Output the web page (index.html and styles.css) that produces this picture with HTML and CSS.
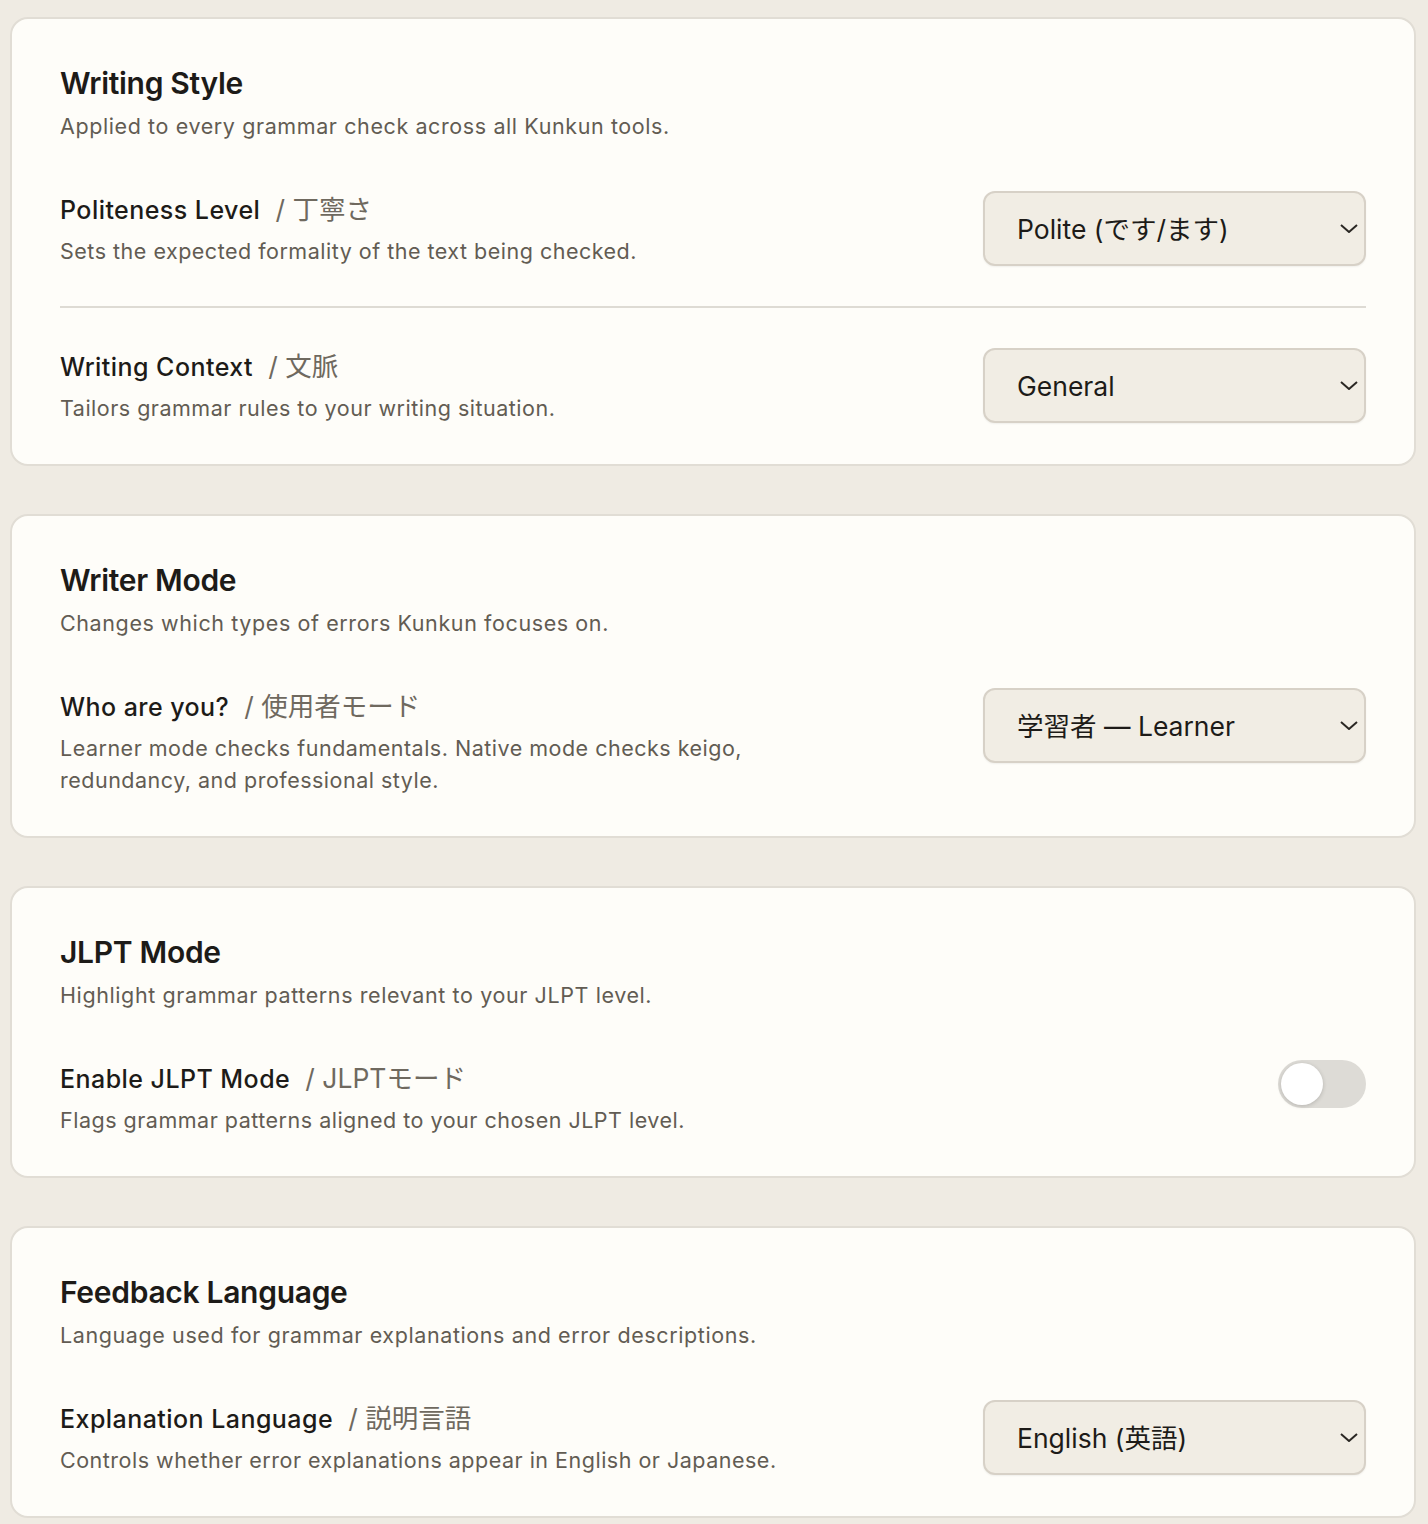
FILE: index.html
```html
<!DOCTYPE html>
<html lang="en">

	<head>
		<meta charset="UTF-8">
		<title>Settings</title>
		<link rel="stylesheet" href="styles.css">
	</head>

	<body>
		<div class="page">

			<section class="card">
				<div class="card-head">
					<h2>Writing Style</h2>
					<p>Applied to every grammar check across all Kunkun tools.</p>
				</div>
				<div class="row">
					<div class="row-text">
						<div class="label">Politeness Level <span class="jp">/ 丁寧さ</span></div>
						<p class="desc">Sets the expected formality of the text being checked.</p>
					</div>
					<div class="select-wrap">
						<select class="select">
							<option>Polite (です/ます)</option>
							<option>Casual (だ/である)</option>
						</select>
						<svg class="chevron" viewBox="0 0 18 9"><path d="M1 1 L9 8 L17 1" /></svg>
					</div>
				</div>
				<div class="row">
					<div class="row-text">
						<div class="label">Writing Context <span class="jp">/ 文脈</span></div>
						<p class="desc">Tailors grammar rules to your writing situation.</p>
					</div>
					<div class="select-wrap">
						<select class="select">
							<option>General</option>
							<option>Business</option>
							<option>Academic</option>
						</select>
						<svg class="chevron" viewBox="0 0 18 9"><path d="M1 1 L9 8 L17 1" /></svg>
					</div>
				</div>
			</section>

			<section class="card">
				<div class="card-head">
					<h2>Writer Mode</h2>
					<p>Changes which types of errors Kunkun focuses on.</p>
				</div>
				<div class="row">
					<div class="row-text">
						<div class="label">Who are you? <span class="jp">/ 使用者モード</span></div>
						<p class="desc">Learner mode checks fundamentals. Native mode checks keigo, redundancy, and professional style.</p>
					</div>
					<div class="select-wrap">
						<select class="select">
							<option>学習者 — Learner</option>
							<option>母語話者 — Native</option>
						</select>
						<svg class="chevron" viewBox="0 0 18 9"><path d="M1 1 L9 8 L17 1" /></svg>
					</div>
				</div>
			</section>

			<section class="card">
				<div class="card-head">
					<h2>JLPT Mode</h2>
					<p>Highlight grammar patterns relevant to your JLPT level.</p>
				</div>
				<div class="row">
					<div class="row-text">
						<div class="label">Enable JLPT Mode <span class="jp">/ JLPTモード</span></div>
						<p class="desc">Flags grammar patterns aligned to your chosen JLPT level.</p>
					</div>
					<label class="toggle">
						<input type="checkbox">
						<span class="knob"></span>
					</label>
				</div>
			</section>

			<section class="card">
				<div class="card-head">
					<h2>Feedback Language</h2>
					<p>Language used for grammar explanations and error descriptions.</p>
				</div>
				<div class="row">
					<div class="row-text">
						<div class="label">Explanation Language <span class="jp">/ 説明言語</span></div>
						<p class="desc">Controls whether error explanations appear in English or Japanese.</p>
					</div>
					<div class="select-wrap">
						<select class="select">
							<option>English (英語)</option>
							<option>日本語 (Japanese)</option>
						</select>
						<svg class="chevron" viewBox="0 0 18 9"><path d="M1 1 L9 8 L17 1" /></svg>
					</div>
				</div>
			</section>

		</div>
	</body>

</html>
```

FILE: styles.css
```css
html,
body,
h2,
p {
	padding: 0;
	margin: 0;
}

body {
	background-color: #efebe3;
	font-family: Inter, "Noto Sans CJK JP", sans-serif;
	color: #1d1b18;
}

.page {
	display: flex;
	flex-direction: column;
	gap: 48px;
	padding: 17px 12px 40px 10px;
}

.card {
	background-color: #fefdf9;
	border: 2px solid #e1ddd5;
	border-radius: 18px;
	padding: 46px 48px 40px;
}

.card-head {
	margin-bottom: 49px;
}

.card-head h2 {
	font-size: 30px;
	line-height: 36px;
	font-weight: 600;
	letter-spacing: -0.3px;
}

.card-head p {
	margin-top: 9px;
	font-size: 21.5px;
	line-height: 32px;
	letter-spacing: 0.6px;
	color: #625c53;
}

.row {
	display: flex;
	justify-content: space-between;
	align-items: flex-start;
	gap: 40px;
}

.row + .row {
	border-top: 2px solid #dedbd4;
	margin-top: 39px;
	padding-top: 40px;
}

.row-text {
	max-width: 720px;
}

.label {
	font-size: 25px;
	line-height: 38px;
	height: 38px;
	font-weight: 500;
	letter-spacing: 0.45px;
}

.label .jp {
	margin-left: 8px;
	font-size: 26.5px;
	line-height: 1;
	font-weight: 400;
	letter-spacing: 0;
	color: #6f695f;
}

.desc {
	margin-top: 6px;
	font-size: 21.5px;
	line-height: 32px;
	letter-spacing: 0.5px;
	color: #625c53;
}

.select-wrap {
	position: relative;
	flex: none;
	width: 383px;
}

.select {
	appearance: none;
	-webkit-appearance: none;
	display: block;
	width: 100%;
	height: 75px;
	padding: 0 60px 0 32px;
	font-family: Inter, "Noto Sans CJK JP", sans-serif;
	font-size: 26.5px;
	color: #1d1b18;
	background-color: #f1ede4;
	border: 2px solid #d7d1c7;
	border-radius: 12px;
	box-shadow: 0 1px 2px rgba(0, 0, 0, 0.06);
}

.chevron {
	position: absolute;
	right: 8px;
	top: 33px;
	width: 18px;
	height: 9px;
	fill: none;
	stroke: #2a2723;
	stroke-width: 2;
}

.toggle {
	position: relative;
	flex: none;
	display: block;
	width: 88px;
	height: 48px;
	border-radius: 24px;
	background-color: #dddbd6;
	cursor: pointer;
}

.toggle input {
	display: none;
}

.toggle .knob {
	position: absolute;
	left: 3px;
	top: 3px;
	width: 42px;
	height: 42px;
	border-radius: 50%;
	background-color: #fff;
	box-shadow: 0 1px 4px rgba(0, 0, 0, 0.18);
}
```
